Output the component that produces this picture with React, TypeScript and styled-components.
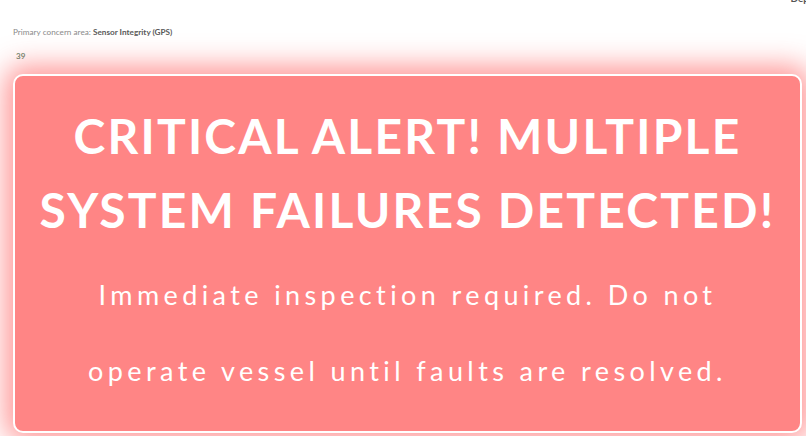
import React from "react";
import styled, { createGlobalStyle } from "styled-components";

const Global = createGlobalStyle`
  html, body { margin: 0; padding: 0; background: #ffffff; overflow: hidden; }
  body { font-family: "Lato", "Noto Sans", sans-serif; }
`;

const Page = styled.div`
  position: relative;
  width: 806px;
  height: 436px;
  padding: 25px 4px 0 13px;
  box-sizing: border-box;
  display: flex;
  flex-direction: column;
`;

const CornerLabel = styled.span`
  position: absolute;
  top: -8px;
  right: -3px;
  font-size: 10px;
  font-weight: 700;
  color: #555;
`;

const Concern = styled.p`
  margin: 0;
  font-size: 8.2px;
  line-height: 14px;
  color: #8a8a8a;
  b { color: #5a5a5a; font-weight: 700; }
`;

const Score = styled.span`
  margin: 11px 0 0 3px;
  font-size: 8px;
  line-height: 12px;
  font-weight: 700;
  color: #6b8a72;
`;

const AlertCard = styled.section`
  margin-top: 12px;
  background: #ff8585;
  border: 2px solid #ffffff;
  border-radius: 10px;
  box-shadow: 0 0 28px 8px rgba(255, 95, 95, 0.65);
  padding: 23px 0 22px;
  display: flex;
  flex-direction: column;
  align-items: center;
  text-align: center;
  color: #ffffff;
`;

const Headline = styled.h1`
  margin: 0;
  font-size: 48px;
  line-height: 74px;
  font-weight: 700;
  letter-spacing: 2.2px;
  white-space: nowrap;
  text-transform: uppercase;
`;

const Detail = styled.p`
  margin: 10px 0 0;
  font-size: 27px;
  line-height: 76px;
  font-weight: 400;
  letter-spacing: 4.4px;
  white-space: nowrap;
`;

export default function App() {
  return (
    <>
      <Global />
      <Page>
        <CornerLabel>Dep</CornerLabel>
        <Concern>
          Primary concern area: <b>Sensor Integrity (GPS)</b>
        </Concern>
        <Score>39</Score>
        <AlertCard>
          <Headline>
            Critical Alert! Multiple
            <br />
            System Failures Detected!
          </Headline>
          <Detail>
            Immediate inspection required. Do not
            <br />
            operate vessel until faults are resolved.
          </Detail>
        </AlertCard>
      </Page>
    </>
  );
}
